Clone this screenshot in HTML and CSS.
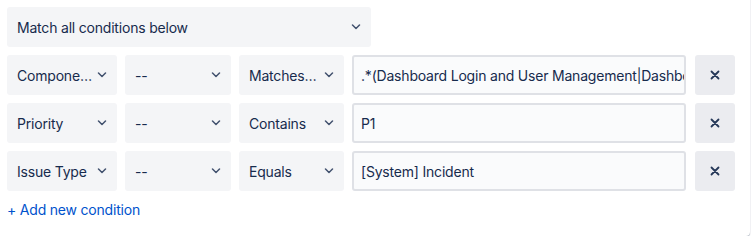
FILE: index.html
```html
<!DOCTYPE html>
<html>
<head>
<meta charset="utf-8">
<link rel="stylesheet" href="styles.css">
</head>
<body>
<div class="card">
  <div class="select select-wide">
    <span class="label">Match all conditions below</span>
    <svg class="chev" viewBox="0 0 10 6" width="10" height="6"><path d="M1.5 1l3.5 3.5 3.5-3.5" fill="none" stroke="#42526e" stroke-width="1.5" stroke-linecap="round" stroke-linejoin="round"/></svg>
  </div>
  <div class="rows">
    <div class="row">
      <div class="select"><span class="label">Compone…</span><svg class="chev" viewBox="0 0 10 6" width="10" height="6"><path d="M1.5 1l3.5 3.5 3.5-3.5" fill="none" stroke="#42526e" stroke-width="1.5" stroke-linecap="round" stroke-linejoin="round"/></svg></div>
      <div class="select"><span class="label">--</span><svg class="chev" viewBox="0 0 10 6" width="10" height="6"><path d="M1.5 1l3.5 3.5 3.5-3.5" fill="none" stroke="#42526e" stroke-width="1.5" stroke-linecap="round" stroke-linejoin="round"/></svg></div>
      <div class="select"><span class="label">Matches…</span><svg class="chev" viewBox="0 0 10 6" width="10" height="6"><path d="M1.5 1l3.5 3.5 3.5-3.5" fill="none" stroke="#42526e" stroke-width="1.5" stroke-linecap="round" stroke-linejoin="round"/></svg></div>
      <div class="input"><span class="value">.*(Dashboard Login and User Management|Dashboard Settings)</span></div>
      <button class="remove"><svg viewBox="0 0 10 10" width="10" height="10"><path d="M1.5 1.5l7 7M8.5 1.5l-7 7" stroke="#253858" stroke-width="1.8" stroke-linecap="round"/></svg></button>
    </div>
    <div class="row">
      <div class="select"><span class="label">Priority</span><svg class="chev" viewBox="0 0 10 6" width="10" height="6"><path d="M1.5 1l3.5 3.5 3.5-3.5" fill="none" stroke="#42526e" stroke-width="1.5" stroke-linecap="round" stroke-linejoin="round"/></svg></div>
      <div class="select"><span class="label">--</span><svg class="chev" viewBox="0 0 10 6" width="10" height="6"><path d="M1.5 1l3.5 3.5 3.5-3.5" fill="none" stroke="#42526e" stroke-width="1.5" stroke-linecap="round" stroke-linejoin="round"/></svg></div>
      <div class="select"><span class="label">Contains</span><svg class="chev" viewBox="0 0 10 6" width="10" height="6"><path d="M1.5 1l3.5 3.5 3.5-3.5" fill="none" stroke="#42526e" stroke-width="1.5" stroke-linecap="round" stroke-linejoin="round"/></svg></div>
      <div class="input"><span class="value">P1</span></div>
      <button class="remove"><svg viewBox="0 0 10 10" width="10" height="10"><path d="M1.5 1.5l7 7M8.5 1.5l-7 7" stroke="#253858" stroke-width="1.8" stroke-linecap="round"/></svg></button>
    </div>
    <div class="row">
      <div class="select"><span class="label">Issue Type</span><svg class="chev" viewBox="0 0 10 6" width="10" height="6"><path d="M1.5 1l3.5 3.5 3.5-3.5" fill="none" stroke="#42526e" stroke-width="1.5" stroke-linecap="round" stroke-linejoin="round"/></svg></div>
      <div class="select"><span class="label">--</span><svg class="chev" viewBox="0 0 10 6" width="10" height="6"><path d="M1.5 1l3.5 3.5 3.5-3.5" fill="none" stroke="#42526e" stroke-width="1.5" stroke-linecap="round" stroke-linejoin="round"/></svg></div>
      <div class="select"><span class="label">Equals</span><svg class="chev" viewBox="0 0 10 6" width="10" height="6"><path d="M1.5 1l3.5 3.5 3.5-3.5" fill="none" stroke="#42526e" stroke-width="1.5" stroke-linecap="round" stroke-linejoin="round"/></svg></div>
      <div class="input"><span class="value">[System] Incident</span></div>
      <button class="remove"><svg viewBox="0 0 10 10" width="10" height="10"><path d="M1.5 1.5l7 7M8.5 1.5l-7 7" stroke="#253858" stroke-width="1.8" stroke-linecap="round"/></svg></button>
    </div>
  </div>
  <a class="add" href="#">+ Add new condition</a>
</div>
</body>
</html>
```
FILE: styles.css
```css
html, body {
  margin: 0;
  padding: 0;
  background: #ffffff;
  overflow: hidden;
}
body {
  font-family: Inter, "Noto Sans", "Liberation Sans", sans-serif;
  font-size: 14px;
  letter-spacing: -0.2px;
  color: #172b4d;
}
.card {
  box-sizing: border-box;
  width: 754px;
  height: 240px;
  margin: -4px 0 0 -4px;
  padding: 11px 0 0 11px;
  background: #fff;
  border-radius: 4px;
  box-shadow: 0 1px 1px rgba(9, 30, 66, 0.25), 0 0 1px rgba(9, 30, 66, 0.31);
}
.select {
  box-sizing: border-box;
  height: 40px;
  background: #f4f5f7;
  border-radius: 3px;
  display: flex;
  align-items: center;
  justify-content: space-between;
  padding: 0 10px 0 10px;
  white-space: nowrap;
}
.select-wide {
  width: 364px;
}
.chev {
  flex: none;
}
.rows {
  display: flex;
  flex-direction: column;
  gap: 8px;
  margin-top: 8px;
}
.row {
  display: grid;
  grid-template-columns: 110px 106px 105px 334px 40px;
  column-gap: 8px;
}
.input {
  box-sizing: border-box;
  height: 40px;
  background: #fafbfc;
  border: 2px solid #dfe1e6;
  border-radius: 3px;
  padding: 0 7px;
  display: flex;
  align-items: center;
  overflow: hidden;
  white-space: nowrap;
}
.remove {
  margin-left: 1px;
  width: 40px;
  height: 40px;
  border: none;
  border-radius: 3px;
  background: #ebecf0;
  display: flex;
  align-items: center;
  justify-content: center;
  padding: 0;
}
.add {
  display: inline-block;
  margin-top: 11px;
  color: #0052cc;
  text-decoration: none;
  line-height: 16px;
}
```
